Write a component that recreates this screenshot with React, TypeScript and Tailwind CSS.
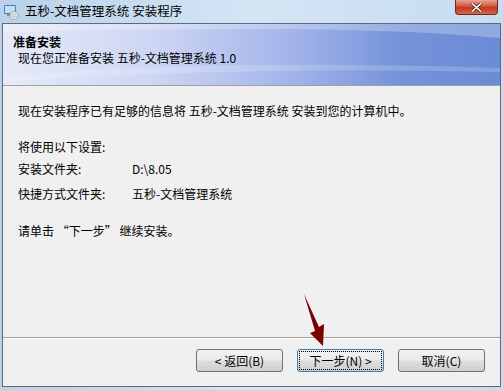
import React from 'react';

const font = { fontFamily: '"Noto Sans CJK SC", "Liberation Sans", sans-serif' };

const WizardButton: React.FC<{ label: string; focused?: boolean }> = ({ label, focused }) => (
    <div
        className={`w-[87px] h-[23px] rounded-[3px] border p-[2px] ${focused ? 'border-[#3c7fb1]' : 'border-[#707070]'} bg-[linear-gradient(#f2f2f2_0%,#ebebeb_45%,#dddddd_55%,#cfcfcf_100%)]`}
    >
        <div className={`h-full flex items-center justify-center text-[12px] text-black leading-none ${focused ? 'outline outline-1 outline-dotted outline-black' : ''}`}>
            {label}
        </div>
    </div>
);

const SetupIcon = () => (
    <svg width="16" height="16" viewBox="0 0 16 16">
        <rect x="1" y="1" width="12" height="9" rx="1" fill="#5a7ea8" />
        <rect x="2" y="2" width="10" height="7" fill="#bfe0f7" />
        <rect x="4" y="10" width="6" height="2" fill="#7d8fa3" />
        <circle cx="11" cy="11.5" r="4.3" fill="#d8dce2" stroke="#8893a0" strokeWidth="0.6" />
        <circle cx="11" cy="11.5" r="1.2" fill="#ffffff" stroke="#8893a0" strokeWidth="0.5" />
    </svg>
);

// soft light streaks over the header band
const HeaderWaves = () => (
    <svg className="absolute inset-0" width="497" height="62" viewBox="0 0 497 62" preserveAspectRatio="none">
        <path d="M0 0 L497 0 L497 14 C400 6 300 2 0 8 Z" fill="#ffffff" opacity="0.25" />
        <path d="M0 52 C150 40 300 38 497 44 L497 48 C300 44 150 48 0 58 Z" fill="#ffffff" opacity="0.18" />
    </svg>
);

const Arrow = () => (
    <svg className="absolute left-0 top-0 pointer-events-none" width="503" height="390">
        <polygon points="304,294 319,327 324,324 323,346 310,333 315,331" fill="#7a0000" />
    </svg>
);

export default function App() {
    return (
        <div className="relative w-[503px] h-[390px] overflow-hidden flex flex-col bg-[linear-gradient(90deg,#b9d1ea,#d4e5f5_50%,#c6dcf1)]" style={font}>
            {/* title bar */}
            <div className="h-[23px] flex items-center pl-[3px] shrink-0">
                <SetupIcon />
                <span className="ml-[6px] text-[12.5px] text-black leading-none">五秒-文档管理系统 安装程序</span>
                <div className="ml-auto mr-[5px] self-start w-[43px] h-[15px] rounded-b-[4px] border border-t-0 border-[#7b2418] bg-[linear-gradient(#e9a394,#d0543c_45%,#c0391e_55%,#d26a4e)] flex items-center justify-center">
                    <svg width="11" height="9" viewBox="0 0 11 9">
                        <path d="M1 0.5 L10 8.5 M10 0.5 L1 8.5" stroke="#3b2020" strokeWidth="3" />
                        <path d="M1 0.5 L10 8.5 M10 0.5 L1 8.5" stroke="#ffffff" strokeWidth="1.6" />
                    </svg>
                </div>
            </div>

            {/* client area */}
            <div className="mx-[2px] h-[364px] border border-[#5d6b7b] bg-[#f0f0f0] flex flex-col">
                <div className="relative h-[62px] border-b border-[#a0a0a0] bg-[linear-gradient(90deg,#e6eaf8_0%,#cdd6f3_30%,#a2b4ea_58%,#7593da_80%,#6a8bd6_100%)] pt-[10px] shrink-0">
                    <HeaderWaves />
                    <div className="relative pl-[10px] text-[12px] font-bold leading-[16px] text-black">准备安装</div>
                    <div className="relative pl-[15px] text-[12px] leading-[16px] text-black">现在您正准备安装 五秒-文档管理系统 1.0</div>
                </div>

                <div className="h-[251px] pt-[17px] pl-[15px] text-[12px] leading-[16px] text-black">
                    <div>现在安装程序已有足够的信息将 五秒-文档管理系统 安装到您的计算机中。</div>
                    <div className="mt-[20px]">将使用以下设置:</div>
                    <div className="mt-[6px] flex">
                        <span className="w-[114px]">安装文件夹:</span>
                        <span>D:\8.05</span>
                    </div>
                    <div className="mt-[9px] flex">
                        <span className="w-[114px]">快捷方式文件夹:</span>
                        <span>五秒-文档管理系统</span>
                    </div>
                    <div className="mt-[21px]">请单击 “下一步” 继续安装。</div>
                </div>

                <div className="border-t border-[#a0a0a0] shadow-[inset_0_1px_0_#ffffff] flex-1 flex pt-[11px] pl-[193px] gap-[14px]">
                    <WizardButton label="< 返回(B)" />
                    <WizardButton label="下一步(N) >" focused />
                    <WizardButton label="取消(C)" />
                </div>
            </div>

            <Arrow />
        </div>
    );
}
